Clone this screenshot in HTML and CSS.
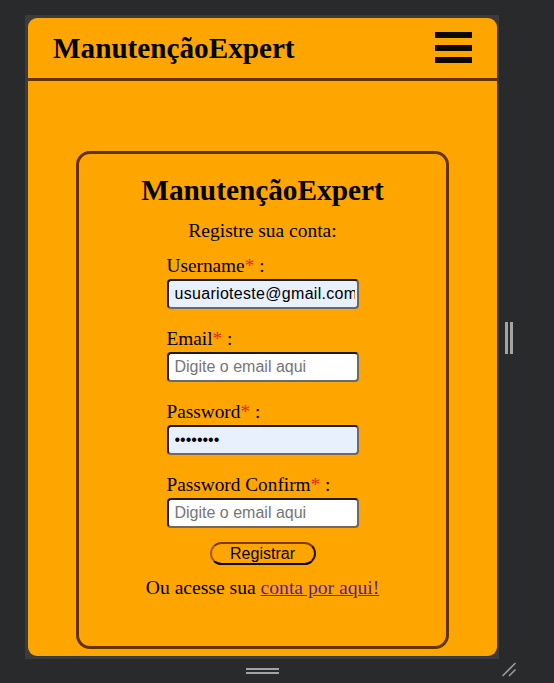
FILE: index.html
```html
<!DOCTYPE html>
<html lang="pt">
<head>
<meta charset="utf-8">
<title>ManutençãoExpert</title>
<link rel="stylesheet" href="styles.css">
</head>
<body>
<div class="stage">
  <div class="device">
    <div class="viewport">
      <header class="topbar">
        <span class="brand">ManutençãoExpert</span>
        <span class="burger"><i></i><i></i><i></i></span>
      </header>
      <main class="main">
        <section class="card">
          <h1 class="card-title">ManutençãoExpert</h1>
          <p class="subtitle">Registre sua conta:</p>
          <form class="form">
            <div class="field">
              <label class="label">Username<span class="req">*</span> :</label>
              <input class="input filled wide" type="text" value="usuarioteste@gmail.com">
            </div>
            <div class="field">
              <label class="label">Email<span class="req">*</span> :</label>
              <input class="input" type="text" placeholder="Digite o email aqui">
            </div>
            <div class="field">
              <label class="label">Password<span class="req">*</span> :</label>
              <input class="input filled" type="password" value="12345678">
            </div>
            <div class="field">
              <label class="label">Password Confirm<span class="req">*</span> :</label>
              <input class="input" type="text" placeholder="Digite o email aqui">
            </div>
            <button class="btn" type="button">Registrar</button>
          </form>
          <p class="alt">Ou acesse sua <a class="link" href="#">conta por aqui!</a></p>
        </section>
      </main>
    </div>
  </div>
  <div class="side-handle"><i></i><i></i></div>
  <div class="bottom-handle"><i></i><i></i></div>
  <svg class="corner-handle" width="16" height="16" viewBox="0 0 16 16">
    <line x1="1.5" y1="15" x2="14.5" y2="2" stroke="#9a9a9a" stroke-width="1.6"/>
    <line x1="8" y1="15" x2="14.5" y2="8.5" stroke="#9a9a9a" stroke-width="1.6"/>
  </svg>
</div>
</body>
</html>
```

FILE: styles.css
```css
html, body {
  margin: 0;
  padding: 0;
}
body {
  background: #292a2c;
  width: 554px;
  height: 683px;
  overflow: hidden;
}
.stage {
  position: relative;
  width: 554px;
  height: 683px;
  padding-top: 15px;
  padding-left: 25px;
  box-sizing: border-box;
}
.device {
  width: 474px;
  height: 644px;
  background: #3b3b3c;
  padding: 3px 2px 3px 3px;
  box-sizing: border-box;
}
.viewport {
  width: 469px;
  height: 638px;
  background: #ffa500;
  border-radius: 9px;
  overflow: hidden;
  font-family: "Liberation Serif", "Times New Roman", serif;
  color: #000;
}
.topbar {
  height: 60px;
  border-bottom: 3px solid #663300;
  display: flex;
  align-items: center;
  justify-content: space-between;
  padding: 0 25px;
}
.brand {
  font-size: 29.2px;
  font-weight: bold;
  line-height: 33px;
  margin-top: 1px;
}
.burger {
  display: flex;
  flex-direction: column;
  gap: 6px;
  margin-top: -1px;
}
.burger i {
  display: block;
  width: 37px;
  height: 6px;
  background: #0d0b00;
}
.burger i:first-child {
  margin-bottom: 1px;
}
.main {
  padding-top: 70px;
}
.card {
  width: 373px;
  height: 498px;
  margin: 0 auto;
  box-sizing: border-box;
  border: 3px solid #663300;
  border-radius: 14px;
  padding-top: 20px;
  display: flex;
  flex-direction: column;
  align-items: center;
}
.card-title {
  margin: 0;
  font-size: 29.3px;
  font-weight: bold;
  line-height: 33px;
}
.subtitle {
  margin: 13px 0 0;
  font-size: 19.5px;
  line-height: 22px;
}
.form {
  margin-top: 13px;
  width: 192px;
  display: flex;
  flex-direction: column;
  gap: 19px;
  align-items: flex-start;
}
.field {
  display: flex;
  flex-direction: column;
  gap: 2px;
}
.label {
  font-size: 19.3px;
  line-height: 22px;
  white-space: nowrap;
}
.req {
  color: #e8261c;
}
.input {
  width: 192px;
  height: 30px;
  box-sizing: border-box;
  margin: 0;
  padding: 0 6px;
  border: 2px solid;
  border-color: #1c1c1c #6a6a6a #6a6a6a #1c1c1c;
  border-radius: 4px;
  background: #fff;
  font-family: "Liberation Sans", Arial, sans-serif;
  font-size: 16px;
  color: #000;
  outline: none;
}
.input::placeholder {
  color: #767676;
}
.input.filled {
  background: #e8f0fe;
}
.input.wide {
  padding-right: 2px;
  letter-spacing: 0.3px;
}
.btn {
  align-self: center;
  margin-top: -5px;
  width: 106px;
  height: 23px;
  padding: 0;
  box-sizing: border-box;
  border: 2px solid;
  border-color: #7a3c00 #2a1400 #0e0700 #a35a10;
  border-radius: 12px;
  background: #ffa500;
  font-family: "Liberation Sans", Arial, sans-serif;
  font-size: 16px;
  line-height: 18px;
  color: #000;
}
.alt {
  margin: 12px 0 0;
  font-size: 19.6px;
  line-height: 22px;
}
.link {
  color: #5820ad;
  text-decoration: underline;
}
.side-handle {
  position: absolute;
  left: 505px;
  top: 322px;
  display: flex;
  gap: 2px;
}
.side-handle i {
  display: block;
  width: 3px;
  height: 32px;
  background: #a3a3a3;
}
.bottom-handle {
  position: absolute;
  left: 246px;
  top: 668px;
  display: flex;
  flex-direction: column;
  gap: 2px;
}
.bottom-handle i {
  display: block;
  width: 33px;
  height: 2px;
  background: #a3a3a3;
}
.corner-handle {
  position: absolute;
  left: 501px;
  top: 661px;
}
```
